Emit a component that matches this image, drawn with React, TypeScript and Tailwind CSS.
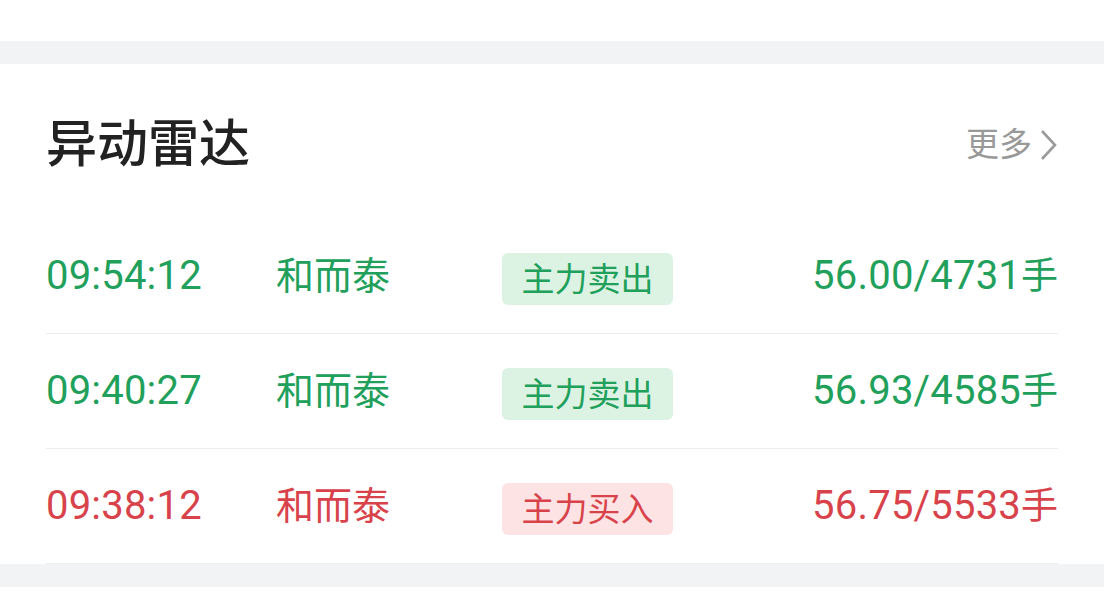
import React from "react";

const rows = [
  { time: "09:54:12", name: "和而泰", tag: "主力卖出", num: "56.00/4731", up: false },
  { time: "09:40:27", name: "和而泰", tag: "主力卖出", num: "56.93/4585", up: false },
  { time: "09:38:12", name: "和而泰", tag: "主力买入", num: "56.75/5533", up: true },
];

export default function App() {
  return (
    <div
      className="w-[1104px] h-[611px] bg-white overflow-hidden"
      style={{ fontFamily: "Roboto, 'Noto Sans CJK SC', sans-serif" }}
    >
      <div className="h-[41px] bg-white" />
      <div className="h-[23px] bg-[#f2f3f5]" />
      <div className="bg-white px-[46px]">
        <div className="h-[155px] flex items-center justify-between">
          <div className="text-[51px] font-medium text-[#222222] leading-none mt-[6px]">
            异动雷达
          </div>
          <div className="flex items-center text-[#999999] text-[33px] leading-none mt-[6px]">
            <span>更多</span>
            <svg width="20" height="34" viewBox="0 0 20 34" className="ml-[6px]">
              <path d="M4 3 L17 17 L4 31" fill="none" stroke="#9a9a9a" strokeWidth="2.6" strokeLinejoin="miter" />
            </svg>
          </div>
        </div>
        {rows.map((r, i) => {
          const color = r.up ? "text-[#d8434b]" : "text-[#21a05b]";
          return (
            <div
              key={i}
              className={`h-[115px] grid grid-cols-[230px_226px_1fr_auto] items-center border-b border-[#ececec] ${color}`}
            >
              <div className="text-[40px] leading-none tracking-[0.2px]">{r.time}</div>
              <div className="text-[38px] leading-none -mt-[1px]">{r.name}</div>
              <div>
                <span
                  className={`inline-flex items-center justify-center w-[171px] h-[52px] rounded-[6px] text-[33px] leading-none mt-[6px] ${
                    r.up ? "bg-[#fde3e4]" : "bg-[#dcf3e4]"
                  }`}
                >
                  {r.tag}
                </span>
              </div>
              <div className="leading-none text-right flex items-baseline">
                <span className="text-[40px] tracking-[0.2px]">{r.num}</span>
                <span className="text-[37px]">手</span>
              </div>
            </div>
          );
        })}
      </div>
      <div className="h-[23px] bg-[#f2f3f5]" />
    </div>
  );
}
